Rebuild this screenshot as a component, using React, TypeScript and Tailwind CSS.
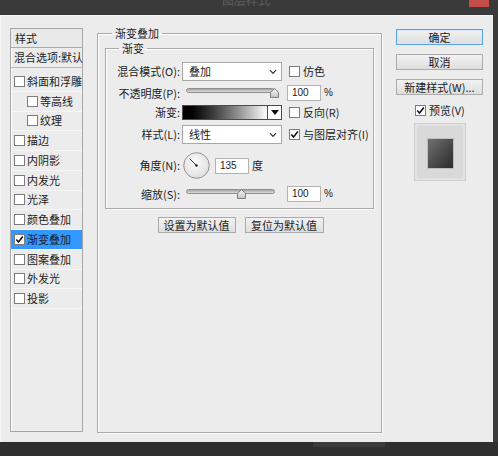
import React from "react";

function Box({ checked = false }: { checked?: boolean }) {
  return (
    <span className="w-[11px] h-[11px] border border-[#7c7c7c] bg-white shrink-0 flex items-center justify-center">
      {checked && (
        <svg viewBox="0 0 10 10" className="w-[9px] h-[9px]">
          <path d="M1.4 5.1 L3.9 7.8 L8.7 1.6" fill="none" stroke="#111" strokeWidth="1.7" />
        </svg>
      )}
    </span>
  );
}

function Chevron() {
  return (
    <svg viewBox="0 0 8 6" className="w-[8px] h-[6px]">
      <path d="M1 1.2 L4 4.4 L7 1.2" fill="none" stroke="#333" strokeWidth="1.2" />
    </svg>
  );
}

function Select({ value }: { value: string }) {
  return (
    <div className="w-[100px] h-[19px] bg-white border border-[#a8a8a8] flex items-center justify-between pl-[6px] pr-[4px] shrink-0">
      <span className="text-[11px]">{value}</span>
      <Chevron />
    </div>
  );
}

function Slider({ thumb }: { thumb: number }) {
  return (
    <div className="relative w-[100px] h-[16px] shrink-0">
      <div className="absolute left-[4px] w-[89px] top-[3px] h-[5px] rounded-full border border-[#8e8e8e] bg-gradient-to-b from-[#a5a5a5] to-[#dcdcdc]" />
      <svg viewBox="0 0 9 10" className="absolute top-[3px] w-[9px] h-[10px]" style={{ left: thumb }}>
        <defs>
          <linearGradient id="thumbg" x1="0" y1="0" x2="0" y2="1">
            <stop offset="0" stopColor="#f4f4f4" />
            <stop offset="1" stopColor="#c8c8c8" />
          </linearGradient>
        </defs>
        <path d="M0.5 4.2 L4.5 0.6 L8.5 4.2 L8.5 9.4 L0.5 9.4 Z" fill="url(#thumbg)" stroke="#7a7a7a" strokeWidth="1" />
      </svg>
    </div>
  );
}

function NumInput({ value, w = "w-[34px]" }: { value: string; w?: string }) {
  return (
    <div className={`${w} h-[16px] bg-white border border-[#b3b3b3] flex items-center pl-[4px] shrink-0 font-['Liberation_Sans',sans-serif] text-[10px]`}>
      {value}
    </div>
  );
}

function Label({ children }: { children: React.ReactNode }) {
  return <span className="w-[74px] text-right shrink-0 text-[11px] whitespace-nowrap">{children}</span>;
}

function Btn({ children, w, focus = false }: { children: React.ReactNode; w: string; focus?: boolean }) {
  return (
    <div
      className={`${w} h-[16px] flex items-center justify-center text-[11px] bg-gradient-to-b from-[#f2f2f2] to-[#dedede] border ${
        focus ? "border-[#5aa3ea] shadow-[inset_0_0_0_1px_#cfe6fb]" : "border-[#ababab]"
      }`}
    >
      {children}
    </div>
  );
}

const items: { name: string; sub?: boolean; selected?: boolean; checked?: boolean }[] = [
  { name: "斜面和浮雕" },
  { name: "等高线", sub: true },
  { name: "纹理", sub: true },
  { name: "描边" },
  { name: "内阴影" },
  { name: "内发光" },
  { name: "光泽" },
  { name: "颜色叠加" },
  { name: "渐变叠加", selected: true, checked: true },
  { name: "图案叠加" },
  { name: "外发光" },
  { name: "投影" },
];

function LeftPanel() {
  return (
    <div className="w-[73px] h-[404px] mt-[2px] border border-[#a7a7a7] shadow-[inset_1px_1px_0_#ffffff] flex flex-col shrink-0">
      <div className="h-[19px] flex items-center pl-[4px] border-b border-[#a9a9a9] bg-[#e9e9e9]">样式</div>
      <div className="h-[20px] flex items-center pl-[3px] border-b border-[#b9b9b9] whitespace-nowrap">混合选项:默认</div>
      <div className="flex flex-col pt-[4px]">
        {items.map((it) => (
          <div
            key={it.name}
            className={`h-[19.75px] flex items-center gap-[2px] border-b border-[#f7f7f7] ${it.sub ? "pl-[16px]" : "pl-[3px]"} ${
              it.selected ? "bg-[#3399ff]" : ""
            }`}
          >
            <Box checked={it.checked} />
            <span className="whitespace-nowrap">{it.name}</span>
          </div>
        ))}
      </div>
    </div>
  );
}

function AngleDial() {
  return (
    <svg viewBox="0 0 27 27" className="w-[27px] h-[27px] shrink-0 ml-[1px]">
      <defs>
        <radialGradient id="dialg" cx="0.45" cy="0.4" r="0.6">
          <stop offset="0" stopColor="#fdfdfd" />
          <stop offset="1" stopColor="#dedede" />
        </radialGradient>
      </defs>
      <circle cx="13.5" cy="13.5" r="12.8" fill="url(#dialg)" stroke="#8a8a8a" strokeWidth="0.9" />
      <line x1="13.5" y1="13.5" x2="6.6" y2="6.6" stroke="#333" strokeWidth="1" />
      <circle cx="13.5" cy="13.5" r="1.2" fill="#222" />
    </svg>
  );
}

function MainPanel() {
  return (
    <fieldset className="w-[285px] h-[407px] ml-[14px] border border-[#aaaaaa] px-[7px] shadow-[inset_1px_1px_0_#ffffff,1px_1px_0_#ffffff] shrink-0">
      <legend className="ml-[7px] px-[3px] leading-[14px] text-[11px]">渐变叠加</legend>
      <fieldset className="mt-[1px] w-full border border-[#aaaaaa] pb-[6px] shadow-[inset_1px_1px_0_#ffffff,1px_1px_0_#ffffff] flex flex-col">
        <legend className="ml-[13px] px-[3px] leading-[14px] text-[11px]">渐变</legend>
        <div className="mt-[7px] h-[19px] flex items-center gap-[2px]">
          <Label>混合模式(O):</Label>
          <Select value="叠加" />
          <div className="ml-[5px] flex items-center gap-[3px]">
            <Box />
            <span>仿色</span>
          </div>
        </div>
        <div className="mt-[4px] h-[16px] flex items-center gap-[2px]">
          <Label>不透明度(P):</Label>
          <Slider thumb={88} />
          <div className="ml-[3px] flex items-center gap-[3px]">
            <NumInput value="100" />
            <span className="font-['Liberation_Sans',sans-serif] text-[10px]">%</span>
          </div>
        </div>
        <div className="mt-[4px] h-[15px] flex items-center gap-[2px]">
          <Label>渐变:</Label>
          <div className="w-[100px] h-[15px] border border-[#4a4a4a] flex shrink-0">
            <div className="flex-1 bg-gradient-to-r from-[#000000] to-[#ffffff]" />
            <div className="w-[14px] border-l border-[#4a4a4a] bg-white flex items-center justify-center">
              <svg viewBox="0 0 8 5" className="w-[8px] h-[5px]">
                <path d="M0 0 L8 0 L4 5 Z" fill="#111" />
              </svg>
            </div>
          </div>
          <div className="ml-[5px] flex items-center gap-[3px]">
            <Box />
            <span>反向(R)</span>
          </div>
        </div>
        <div className="mt-[5px] h-[19px] flex items-center gap-[2px]">
          <Label>样式(L):</Label>
          <Select value="线性" />
          <div className="ml-[5px] flex items-center gap-[3px]">
            <Box checked />
            <span>与图层对齐(I)</span>
          </div>
        </div>
        <div className="mt-[8px] h-[27px] flex items-center gap-[2px]">
          <Label>角度(N):</Label>
          <AngleDial />
          <div className="ml-[3px] flex items-center gap-[3px]">
            <NumInput value="135" />
            <span>度</span>
          </div>
        </div>
        <div className="mt-[7px] h-[16px] flex items-center gap-[2px]">
          <Label>缩放(S):</Label>
          <Slider thumb={55} />
          <div className="ml-[3px] flex items-center gap-[3px]">
            <NumInput value="100" />
            <span className="font-['Liberation_Sans',sans-serif] text-[10px]">%</span>
          </div>
        </div>
      </fieldset>
      <div className="mt-[8px] flex justify-center gap-[9px] pl-[2px]">
        <Btn w="w-[78px]">设置为默认值</Btn>
        <Btn w="w-[79px]">复位为默认值</Btn>
      </div>
    </fieldset>
  );
}

function RightPanel() {
  return (
    <div className="w-[87px] ml-[14px] mt-[3px] flex flex-col shrink-0">
      <Btn w="w-[87px]" focus>确定</Btn>
      <div className="mt-[9px]">
        <Btn w="w-[87px]">取消</Btn>
      </div>
      <div className="mt-[9px]">
        <Btn w="w-[87px]">新建样式(W)...</Btn>
      </div>
      <div className="mt-[10px] pl-[19px] flex items-center gap-[3px] h-[11px]">
        <Box checked />
        <span>预览(V)</span>
      </div>
      <div className="mt-[7px] ml-[18px] w-[52px] h-[58px] bg-[#d9d9d9] border border-[#cfcfcf] shadow-[inset_0_0_0_2px_#e2e2e2] flex items-center justify-center">
        <div className="w-[25px] h-[29px] mt-[2px] bg-gradient-to-br from-[#727272] to-[#2b2b2b] shadow-[0_0_0_1px_#bdbdbd]" />
      </div>
    </div>
  );
}

export default function App() {
  return (
    <div className="w-[498px] h-[456px] bg-[#333333] flex flex-col overflow-hidden font-['Noto_Sans_CJK_SC',sans-serif] text-[11px] text-[#1c1c1c] leading-none">
      <div className="h-[15px] shrink-0 bg-[#3a3a3a] relative flex justify-center overflow-hidden">
        <span className="text-[12px] text-[#5e5e5e] -mt-[6px] -ml-[6px]">图层样式</span>
        <div className="absolute top-0 right-[9px] w-[20px] h-[7px] bg-[#c44f4a]" />
      </div>
      <div className="flex shrink-0">
        <div className="w-[493px] h-[427px] bg-[#ececec] border-t border-l border-[#f8f8f8] flex items-start pl-[9px] pt-[10px] shrink-0">
          <LeftPanel />
          <MainPanel />
          <RightPanel />
        </div>
        <div className="flex-1 bg-[#3a3a3a]" />
      </div>
      <div className="flex-1 bg-[#2f2f2f] flex">
        <div className="ml-[313px] w-[72px] h-[5px] bg-[#3b3b3b]" />
      </div>
    </div>
  );
}
